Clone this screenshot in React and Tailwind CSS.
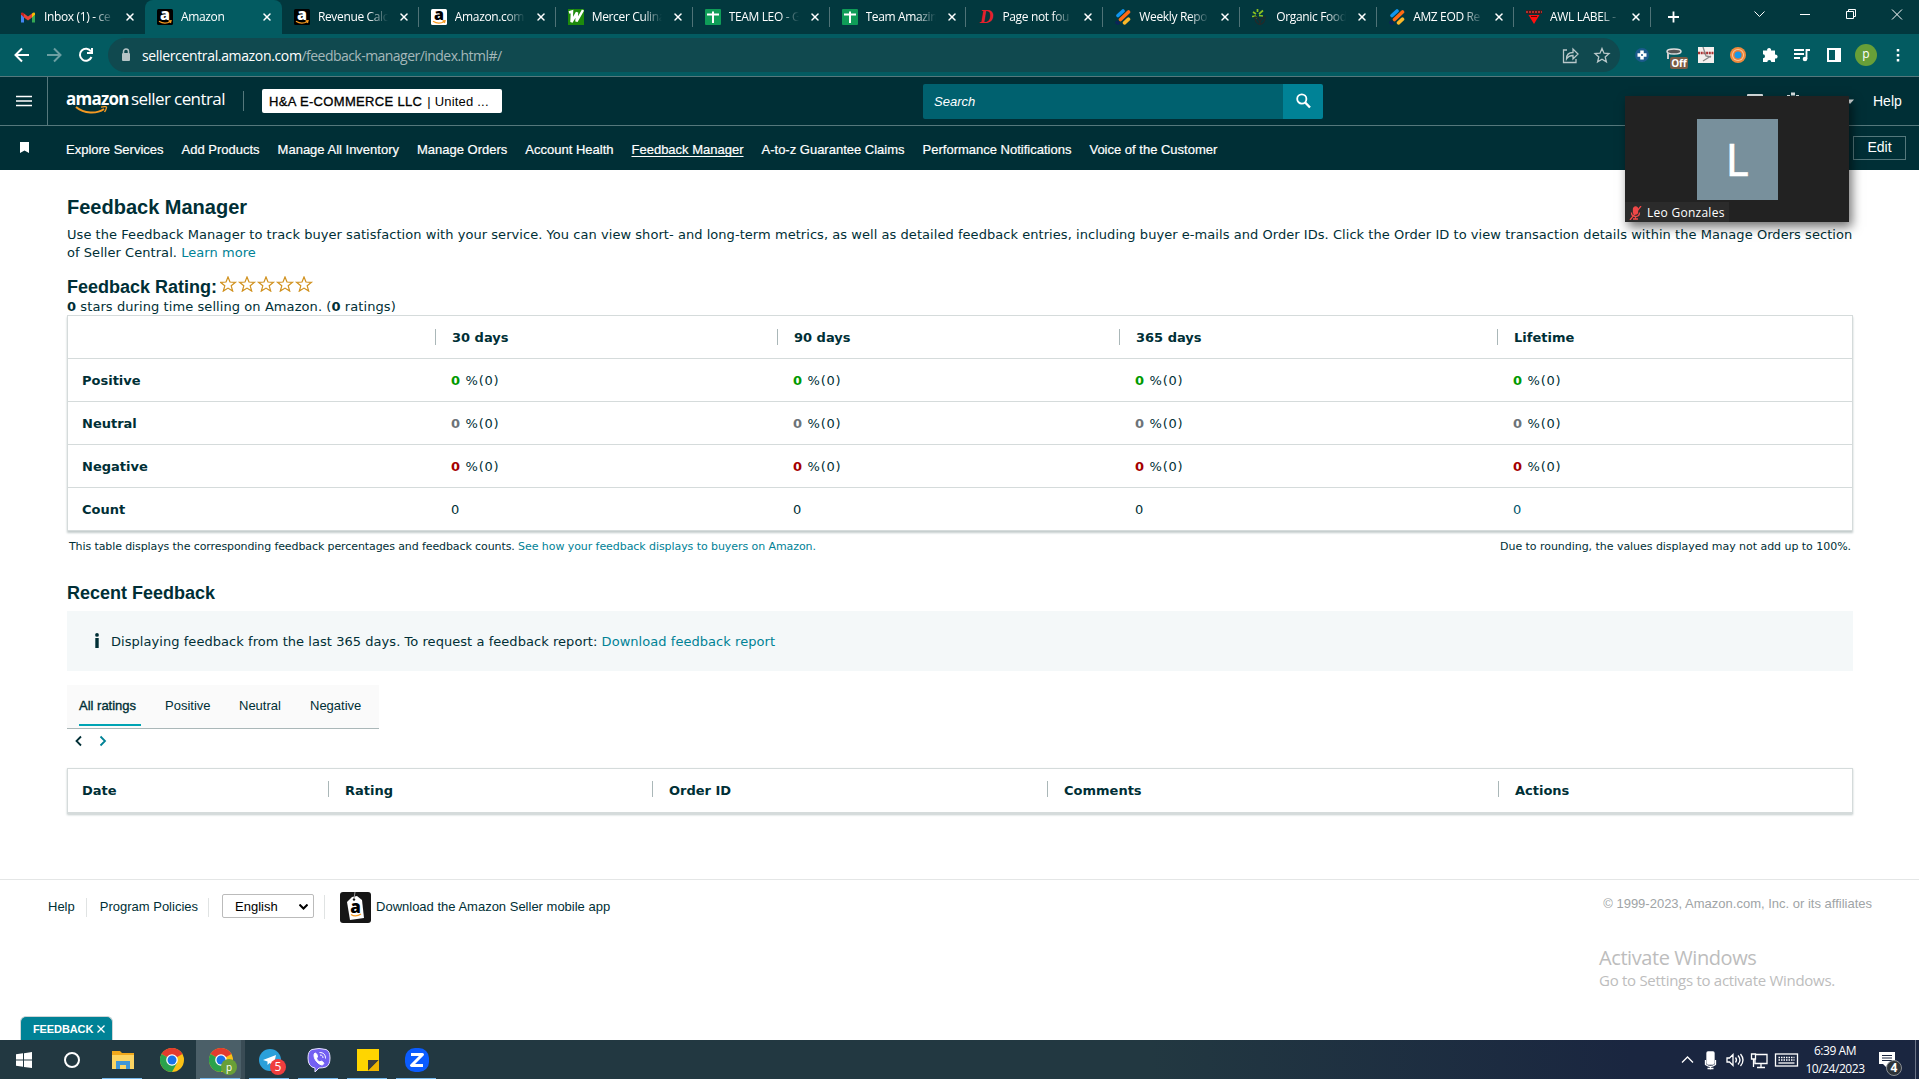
import { X } from "lucide-react";

const tabs = [
  { title: "Inbox (1) - ce", icon: "gmail" },
  { title: "Amazon", icon: "amazon", active: true },
  { title: "Revenue Calc", icon: "amazon" },
  { title: "Amazon.com", icon: "amazonLight" },
  { title: "Mercer Culina", icon: "mercer" },
  { title: "TEAM LEO - G", icon: "sheets" },
  { title: "Team Amazin", icon: "sheets" },
  { title: "Page not fou", icon: "dee" },
  { title: "Weekly Repo", icon: "stripes" },
  { title: "Organic Food", icon: "plant" },
  { title: "AMZ EOD Re", icon: "stripes" },
  { title: "AWL LABEL -", icon: "label" },
];

const navLinks = [
  "Explore Services",
  "Add Products",
  "Manage All Inventory",
  "Manage Orders",
  "Account Health",
  "Feedback Manager",
  "A-to-z Guarantee Claims",
  "Performance Notifications",
  "Voice of the Customer",
];

const ratingRows = [
  { label: "Positive", color: "text-[#009a00]" },
  { label: "Neutral", color: "text-[#6c7378]" },
  { label: "Negative", color: "text-[#a50000]" },
];

function AmazonMark({ bg, fg }) {
  return (
    <svg width="16" height="16" viewBox="0 0 16 16">
      <rect width="16" height="16" rx="1.5" fill={bg} />
      <text x="8" y="11" textAnchor="middle" fontFamily="Open Sans, sans-serif" fontWeight="800" fontSize="16" fill={fg}>a</text>
      <path d="M2 12.300c3.500 2.300 8 2.300 11.500.2M11.500 11.800l2.500-.1-.6 2.300" stroke="#f79a1f" strokeWidth="1.300" fill="none" />
    </svg>
  );
}

function Favicon({ name }) {
  switch (name) {
    case "gmail":
      return (
        <svg width="16" height="16" viewBox="0 0 16 16">
          <path d="M1 4v9.500h3V7z" fill="#4285f4" />
          <path d="M12 7v6.500h3V4z" fill="#34a853" />
          <path d="M4 4.500 8 7.500l4-3v4L8 11.500 4 8.500z" fill="#ea4335" />
          <path d="M1 4.500V5.500L4 8.500V4.500C3 3 1 3 1 4.500z" fill="#c5221f" />
          <path d="M15 4.500V5.500L12 8.500V4.500C13 3 15 3 15 4.500z" fill="#fbbc04" />
        </svg>
      );
    case "amazon":
      return <AmazonMark bg="#000" fg="#fff" />;
    case "amazonLight":
      return <AmazonMark bg="#fff" fg="#000" />;
    case "mercer":
      return (
        <svg width="16" height="16" viewBox="0 0 16 16">
          <rect width="16" height="16" fill="#1e8a0c" />
          <path d="M1 3.500 4 2.500 3.500 13 9 3.500 8.500 12.500 15 1" stroke="#fff" strokeWidth="2.500" fill="none" />
        </svg>
      );
    case "sheets":
      return (
        <svg width="16" height="16" viewBox="0 0 16 16">
          <rect width="16" height="16" rx="1" fill="#0f9d58" />
          <path d="M2 5.500h12M8 2.500v11.500" stroke="#fff" strokeWidth="2" />
        </svg>
      );
    case "dee":
      return (
        <span className="w-4 text-center font-['Liberation_Serif',serif] text-[19px] leading-4 font-bold italic text-[#e5202b]">D</span>
      );
    case "stripes":
      return (
        <svg width="16" height="16" viewBox="0 0 16 16" strokeWidth="3.600" strokeLinecap="round">
          <path d="M3 6.500 8 2" stroke="#1095ee" />
          <path d="M5.500 10.500 13.500 3" stroke="#ff6a13" />
          <path d="M9.500 13.800 13.500 10.200" stroke="#fbb829" />
          <path d="M2 13.500 3 14" stroke="#0b2458" />
        </svg>
      );
    case "plant":
      return (
        <svg width="16" height="16" viewBox="0 0 16 16" fill="none">
          <path d="M5.500 3V0M4 5 1 3M7 5l4-3.500M4 7 0 7.500M7 6.500l4 .5M5 8 3.500 9" stroke="#8bc220" strokeWidth="1.700" />
          <path d="M3 8c0 5 2 7 5 7.500 3-1 5-2 5-7.500-2 0-4 2-5 6-1-3-3-6-5-6z" stroke="#232a2a" strokeWidth="1.300" />
        </svg>
      );
    default:
      return (
        <svg width="16" height="16" viewBox="0 0 16 16">
          <rect x="0" y="1" width="16" height="4" fill="#3a1d1d" />
          <path d="M0 3h16" stroke="#d33" strokeWidth="1.500" strokeDasharray="2 1" />
          <path d="M2.500 6h11L8 15z" fill="#ff1010" />
          <path d="M5 7.500h6" stroke="#600" />
        </svg>
      );
  }
}

function TabStrip() {
  return (
    <div className="flex h-[34px] bg-[#02383e] text-white">
      <div className="flex w-[1651px]">
        {tabs.map((tab, i) => (
          <div
            key={i}
            className={
              "flex min-w-0 items-center " +
              (i === 0 ? "w-[145px] pl-5 " : "flex-1 pl-3 ") +
              (tab.active ? "rounded-t-lg bg-[#035b61]" : "")
            }
          >
            <Favicon name={tab.icon} />
            <span className="ml-2 w-[70px] text-[12px] tracking-[-0.35px] whitespace-nowrap [mask-image:linear-gradient(to_right,black_72%,transparent)]">
              {tab.title}
            </span>
            <X className="ml-[10px] size-3 shrink-0" strokeWidth={3} />
            <span className="grow" />
            {i > 1 && <span className="h-5 w-px bg-[#4f7377]" />}
          </div>
        ))}
      </div>
      <svg width="268" height="34" viewBox="0 0 268 34" fill="none" stroke="#fff">
        <path d="M17 17h11M22.500 11.500v11" strokeWidth="1.800" />
        <path d="M103.500 11.500l5 5 5-5M149 14.500h10" />
        <path d="M195.500 11.500h7v7h-7zM197.500 11.500v-2h7v7h-2M241 9.500l10 10M251 9.500l-10 10" />
      </svg>
    </div>
  );
}

function Toolbar() {
  return (
    <div className="flex h-[42px] items-center bg-[#035b61] text-white">
      <svg width="108" height="42" viewBox="0 0 108 42" fill="none" strokeWidth="2">
        <path d="M29 21H16M22 14.500 15.500 21l6.500 6.500" stroke="#fff" />
        <path d="M47 21h13M54 14.500l6.500 6.500-6.500 6.500" stroke="#6c9fa2" />
        <path d="M91 17.500a6 6 0 1 0 .5 5.500M92 14v5h-5" stroke="#fff" />
      </svg>
      <div className="flex h-[34px] w-[1512px] items-center rounded-full bg-[#10494f] pl-[13px] text-[14px]">
        <svg width="10" height="14" viewBox="0 0 10 14">
          <rect x="1" y="5" width="8" height="8" rx="1" fill="#b5c4c6" />
          <path d="M2.500 5V3.500a2.500 2.500 0 0 1 5 0V5" stroke="#b5c4c6" strokeWidth="1.500" fill="none" />
        </svg>
        <span className="ml-[11px] tracking-[-0.35px]">sellercentral.amazon.com</span>
        <span className="grow tracking-[-0.54px] text-[#a5b8ba]">/feedback-manager/index.html#/</span>
        <svg width="60" height="20" viewBox="0 0 60 20" fill="none" stroke="#b9c8ca" strokeWidth="1.300">
          <path d="M7 5H3.500v12.500h12.500V14M6.500 14c0-4.500 2-6.500 6.500-6.500V4l5 5-5 5v-3.500c-3 0-5 1-6.500 3.500z" />
          <path d="M42 3.500l2 4.700 5 .4-3.800 3.300 1.200 5-4.400-2.700-4.400 2.700 1.200-5L35 8.600l5-.4z" />
        </svg>
      </div>
      <div className="ml-[6px] flex items-center">
        <ToolIcon>
          <circle cx="8" cy="8" r="7" fill="#1b5a8c" />
          <path d="M8 3.500v9M3.500 8h9" stroke="#fff" strokeWidth="3.500" />
          <circle cx="8" cy="8" r="1" fill="#1b5a8c" />
        </ToolIcon>
        <div className="relative flex w-8 justify-center">
          <svg width="16" height="16" viewBox="0 0 16 16">
            <ellipse cx="8" cy="4.500" rx="7" ry="2.500" fill="#555" stroke="#ddd" strokeWidth="1.500" />
            <path d="M2 6v6" stroke="#ccc" strokeWidth="2" />
          </svg>
          <span className="absolute top-[10px] left-3 w-[18px] rounded-xs bg-[#7b5c46] text-center text-[10px] leading-3 font-bold">Off</span>
        </div>
        <ToolIcon>
          <rect width="16" height="16" fill="#f4f0ee" />
          <path d="M0 6h16" stroke="#a33" strokeWidth="2.500" strokeDasharray="2 .7" />
          <path d="M5 0 8 9l5 1M13 9 5 14" stroke="#888" strokeWidth="1.300" fill="none" />
        </ToolIcon>
        <ToolIcon>
          <circle cx="8" cy="8" r="8" fill="#f08a3c" />
          <circle cx="8" cy="8" r="6" fill="#f8c79c" />
          <circle cx="8" cy="8" r="5" fill="#ee7d33" />
          <circle cx="8" cy="8" r="3.500" fill="#1698e8" />
        </ToolIcon>
        <ToolIcon>
          <path d="M1 3.500h4.200a2 2 0 1 1 3.800 0h4v4.200a2 2 0 1 1 0 3.800V15H9.300a2 2 0 0 0-4 0H1v-3.700a2 2 0 0 0 0-4z" fill="#fff" />
        </ToolIcon>
        <ToolIcon>
          <path d="M0 3h10M0 7h10M0 11h6" stroke="#fff" strokeWidth="1.800" />
          <path d="M12.500 12V3H16" stroke="#fff" strokeWidth="1.800" fill="none" />
          <circle cx="11" cy="12" r="2.300" fill="#fff" />
        </ToolIcon>
        <ToolIcon>
          <path d="M2 2h12v12H2zM10 2v12M12 2v12" stroke="#fff" strokeWidth="2" fill="none" />
        </ToolIcon>
        <div className="flex w-8 justify-center">
          <span className="flex size-[22px] items-center justify-center rounded-full bg-[#689f38] pb-0.5 text-[12px] leading-none">p</span>
        </div>
        <ToolIcon>
          <path d="M8 2v2.500M8 7v2.500M8 12v2.500" stroke="#fff" strokeWidth="2.500" />
        </ToolIcon>
      </div>
    </div>
  );
}

function ToolIcon({ children }) {
  return (
    <div className="flex w-8 justify-center">
      <svg width="16" height="16" viewBox="0 0 16 16">{children}</svg>
    </div>
  );
}

function SellerHeader() {
  return (
    <header className="bg-[#002f36] font-['Liberation_Sans',Arial,sans-serif] text-[13px] text-white">
      <div className="flex h-[50px] items-center border-y border-[#55787c]">
        <div className="flex h-full w-12 items-center justify-center border-r border-[#55787c]">
          <svg width="16" height="12" viewBox="0 0 16 12" stroke="#fff" strokeWidth="1.600">
            <path d="M0 1.500h16M0 6h16M0 10.500h16" />
          </svg>
        </div>
        <div className="relative ml-[18px] flex h-full w-[160px] items-center gap-1 pb-1 font-['Open_Sans',sans-serif] text-[17px] whitespace-nowrap">
          <b className="w-[61px] tracking-[-0.75px]">amazon</b>
          <span className="tracking-[-0.58px]">seller central</span>
          <svg className="absolute top-[29px] left-[9px]" width="34" height="9" viewBox="0 0 34 9" fill="none" stroke="#f59a23">
            <path d="M1 1c8 7 21 7 28 2" strokeWidth="2" />
            <path d="M26 1.200c4-1 6-.5 5.500.3-.2 2-1 3-2 4.500" strokeWidth="1.300" />
          </svg>
        </div>
        <span className="ml-[17px] h-5 w-px bg-[#55787c]" />
        <div className="ml-[18px] flex h-6 w-[240px] items-center gap-[5px] rounded-xs bg-white pt-px pl-[7px] text-black">
          <span className="tracking-[0.33px] [-webkit-text-stroke:0.3px]">H&amp;A E-COMMERCE LLC</span>
          <span className="tracking-[0.2px]">| United ...</span>
        </div>
        <div className="ml-[421px] flex h-[35px] w-[400px]">
          <div className="flex grow items-center rounded-l-xs bg-[#00616f] pt-px pl-[11px] italic">Search</div>
          <div className="flex w-10 items-center justify-center rounded-r-xs bg-[#008296]">
            <svg width="15" height="16" viewBox="0 0 15 16" fill="none" stroke="#fff">
              <circle cx="5.800" cy="6" r="4.600" strokeWidth="1.800" />
              <path d="M9.200 9.500 14 14.500" strokeWidth="2.400" />
            </svg>
          </div>
        </div>
        <svg className="mb-[6px] ml-[420px]" width="112" height="16" viewBox="0 0 112 16" fill="#dbe2e3">
          <rect x="4" y="4" width="16" height="10" rx="1" />
          <path d="M48 2.500h4v3h-4zM44 5h3v3h-3zM53 5h3v3h-3z" />
          <path d="M103 9.500h8l-4 4.500z" />
        </svg>
        <span className="ml-[18px] text-[14px]">Help</span>
      </div>
      <div className="flex h-11 items-center">
        <svg className="mb-px ml-[20px]" width="9" height="11" viewBox="0 0 9 11">
          <path d="M0 0h9v11L4.500 8.500 0 11z" fill="#fff" />
        </svg>
        <nav className="ml-[37px] flex grow gap-[18px] pt-1 [-webkit-text-stroke:0.2px]">
          {navLinks.map((link) => (
            <a key={link} className={link === "Feedback Manager" ? "underline underline-offset-2" : ""}>
              {link}
            </a>
          ))}
        </nav>
        <button className="mr-[13px] mb-px h-6 w-[53px] border border-[#55787c] text-[14px]">Edit</button>
      </div>
    </header>
  );
}

function Stars() {
  return (
    <svg width="95" height="16" viewBox="0 0 95 16" fill="none" stroke="#d0901c" strokeWidth="1.200">
      {[0, 19, 38, 57, 76].map((x) => (
        <path key={x} transform={"translate(" + x + " 0)"} d="M8 1l2 5 5.500.3-4.300 3.500 1.500 5.300-4.700-3-4.700 3L4.800 9.800.5 6.300 6 6z" />
      ))}
    </svg>
  );
}

function HeadCell({ children }) {
  return (
    <div className="relative flex items-center pl-[17px]">
      <span className="absolute top-3 left-0 h-4 w-px bg-[#aab7b8]" />
      {children}
    </div>
  );
}

function FeedbackPage() {
  return (
    <main className="h-[709px] px-[67px] pt-[25px] pr-[66px] font-['DejaVu_Sans',Verdana,sans-serif] text-[13px] leading-[18px] text-[#002f36]">
      <h1 className="font-['Liberation_Sans',Arial,sans-serif] text-[20px] leading-6 font-bold">Feedback Manager</h1>
      <p className="mt-[7px] tracking-[0.05px] whitespace-nowrap">
        Use the Feedback Manager to track buyer satisfaction with your service. You can view short- and long-term metrics, as well as detailed feedback entries, including buyer e-mails and Order IDs. Click the Order ID to view transaction details within the Manage Orders section
        <br />
        of Seller Central. <a className="text-[#008296]">Learn more</a>
      </p>
      <div className="mt-[13px] flex h-6 items-center gap-[3px]">
        <h2 className="font-['Liberation_Sans',Arial,sans-serif] text-[18px] font-bold">Feedback Rating:</h2>
        <div className="mb-[6px]">
          <Stars />
        </div>
      </div>
      <p className="-mt-px tracking-[0.08px]">
        <b>0</b> stars during time selling on Amazon. (<b>0</b> ratings)
      </p>
      <div className="-mt-px h-[216px] w-[1786px] divide-y divide-[#d5dbdb] border border-[#d5dbdb] shadow-[0_2px_2px_#c4cccc]">
        <div className="grid h-[43px] grid-cols-[367px_342px_342px_378px_1fr] pt-px font-bold">
          <span />
          <HeadCell>30 days</HeadCell>
          <HeadCell>90 days</HeadCell>
          <HeadCell>365 days</HeadCell>
          <HeadCell>Lifetime</HeadCell>
        </div>
        {ratingRows.map((row) => (
          <div key={row.label} className="grid h-[43px] grid-cols-[383px_342px_342px_378px_1fr] items-center pt-px">
            <b className="pl-[14px]">{row.label}</b>
            {[0, 1, 2, 3].map((i) => (
              <span key={i} className="tracking-[0.72px]">
                <b className={row.color}>0</b> %(0)
              </span>
            ))}
          </div>
        ))}
        <div className="grid h-[42px] grid-cols-[383px_342px_342px_378px_1fr] items-center pt-px">
          <b className="pl-[14px]">Count</b>
          <span>0</span>
          <span>0</span>
          <span>0</span>
          <span className="text-[#00566b]">0</span>
        </div>
      </div>
      <div className="mt-[7px] flex justify-between px-[2px] text-[11px]">
        <span className="tracking-[-0.1px]">
          This table displays the corresponding feedback percentages and feedback counts.{" "}
          <a className="tracking-[-0.07px] text-[#008296]">See how your feedback displays to buyers on Amazon.</a>
        </span>
        <span className="tracking-[-0.04px]">Due to rounding, the values displayed may not add up to 100%.</span>
      </div>
      <h2 className="mt-[25px] font-['Liberation_Sans',Arial,sans-serif] text-[18px] leading-6 font-bold">Recent Feedback</h2>
      <div className="mt-[6px] flex h-[60px] items-center bg-[#f4f8f9] pt-px pl-[27px]">
        <svg className="mb-[3px]" width="6" height="15" viewBox="0 0 6 15" fill="#002f36">
          <circle cx="3" cy="1.900" r="1.900" />
          <rect x="1.300" y="5" width="3.400" height="10" />
        </svg>
        <span className="ml-[11px] tracking-[0.05px]">
          Displaying feedback from the last 365 days. To request a feedback report:{" "}
          <a className="text-[#008296]">Download feedback report</a>
        </span>
      </div>
      <div className="mt-[14px] flex h-11 w-[312px] border-b border-[#aab7b8] bg-[#fafafa] pl-3 font-['Liberation_Sans',Arial,sans-serif] leading-[41px]">
        <span className="h-[41px] w-[62px] border-b-2 border-[#00a4b4] [-webkit-text-stroke:0.35px]">All ratings</span>
        <span className="ml-6 w-[74px]">Positive</span>
        <span className="w-[71px]">Neutral</span>
        <span>Negative</span>
      </div>
      <svg className="mt-[6px] ml-[8px]" width="34" height="12" viewBox="0 0 34 12" fill="none" strokeWidth="1.800">
        <path d="M6 1.500 1.500 6 6 10.500" stroke="#002f36" />
        <path d="M25.500 1.500 30 6l-4.500 4.500" stroke="#008296" />
      </svg>
      <div className="mt-[21px] grid h-[46px] w-[1786px] grid-cols-[260px_324px_395px_451px_1fr] border border-b-2 border-[#d5dbdb] font-bold shadow-[0_1px_2px_#c4cccc]">
        <span className="self-center pl-[14px]">Date</span>
        <HeadCell>Rating</HeadCell>
        <HeadCell>Order ID</HeadCell>
        <HeadCell>Comments</HeadCell>
        <HeadCell>Actions</HeadCell>
      </div>
    </main>
  );
}

function Footer() {
  return (
    <footer className="flex h-[161px] flex-col border-t border-[#e4e6e6] font-['Liberation_Sans',Arial,sans-serif] text-[13px] text-[#002f36]">
      <div className="mt-[11px] flex h-8 items-center pl-12">
        <span>Help</span>
        <span className="mr-[13px] ml-[11px] h-[19px] w-px bg-[#e0e3e3]" />
        <span>Program Policies</span>
        <span className="mr-[13px] ml-[10px] h-[19px] w-px bg-[#e0e3e3]" />
        <div className="mb-0.5 flex h-6 w-[92px] items-center justify-between rounded-xs border border-[#bbb] pt-px pr-[5px] pl-3 text-black">
          English
          <svg width="9" height="6" viewBox="0 0 9 6" fill="none" stroke="#000" strokeWidth="2">
            <path d="M.5.500l4 4 4-4" />
          </svg>
        </div>
        <span className="mr-[15px] ml-[10px] h-6 w-px bg-[#e0e3e3]" />
        <svg width="31" height="31" viewBox="0 0 31 31">
          <rect width="31" height="31" rx="3" fill="#161616" />
          <path d="M7 10l5-5 5-1 5 4 2 18-14 2z" fill="#fff" />
          <circle cx="14" cy="7.500" r="1.200" fill="#161616" />
          <path d="M14 7 15 0" stroke="#999" />
          <text x="15.500" y="20.500" textAnchor="middle" fontFamily="Open Sans, sans-serif" fontWeight="800" fontSize="17" fill="#000">a</text>
          <path d="M11 22.500c3 2 7 1.500 10-.5" stroke="#f59a23" strokeWidth="1.300" fill="none" />
        </svg>
        <span className="ml-[5px] grow">Download the Amazon Seller mobile app</span>
        <span className="mr-[47px] mb-[6px] text-[#a0a4a6]">© 1999-2023, Amazon.com, Inc. or its affiliates</span>
      </div>
      <div className="mt-[22px] ml-[1599px] font-['Open_Sans',sans-serif] text-[#bdbdbd]">
        <div className="text-[20px] leading-[26px] tracking-[-0.42px]">Activate Windows</div>
        <div className="text-[15px] leading-[19px] tracking-[-0.28px]">Go to Settings to activate Windows.</div>
      </div>
      <div className="mt-auto ml-5 flex h-6 w-[93px] items-center gap-[4px] rounded-t-md border border-b-0 border-[#cfd5d6] bg-[#008296] pt-px pl-3 text-[11px] font-bold tracking-[-0.1px] whitespace-nowrap text-white">
        FEEDBACK
        <svg width="8" height="8" viewBox="0 0 8 8" stroke="#fff" strokeWidth="1.300">
          <path d="M.5.500l7 7M7.500.500l-7 7" />
        </svg>
      </div>
    </footer>
  );
}

function ChromeIcon() {
  return (
    <svg width="24" height="24" viewBox="0 0 24 24">
      <circle cx="12" cy="12" r="12" fill="#fbc116" />
      <path d="M12 12 1.600 6A12 12 0 0 1 22.400 6z" fill="#e33b2e" />
      <path d="M1.600 6A12 12 0 0 0 12 24l5-9-5-3z" fill="#2ba24c" />
      <circle cx="12" cy="12" r="5.800" fill="#fff" />
      <circle cx="12" cy="12" r="4.500" fill="#1a73e8" />
    </svg>
  );
}

function TaskItem({ open, active, children }) {
  return (
    <div
      className={
        "relative flex h-full w-[49px] items-center justify-center " +
        (active ? "border-r-4 border-[#3a4c55] bg-[#4b5f68] pl-1" : "")
      }
    >
      {children}
      {open && <span className="absolute bottom-0 left-1 h-px w-10 bg-[#76b9ed]" />}
    </div>
  );
}

function Taskbar() {
  return (
    <div className="flex h-[39px] bg-linear-to-r from-[#223841] from-60% to-[#1a2640] to-85% text-white">
      <TaskItem>
        <svg className="mr-px" width="16" height="16" viewBox="0 0 16 16" fill="#fff">
          <path d="M0 2.300 7 1.300V7.600H0zM8 1.200 16 0v7.600H8zM0 8.500h7v6.300L0 13.800zM8 8.500h8V16L8 14.900z" />
        </svg>
      </TaskItem>
      <TaskItem>
        <span className="mr-[3px] size-4 rounded-full border-2 border-white" />
      </TaskItem>
      <TaskItem open>
        <svg width="22" height="18" viewBox="0 0 22 18">
          <path d="M0 0h8l2 2h12v16H0z" fill="#f0a81c" />
          <path d="M0 4h22v14H0z" fill="#fcd462" />
          <path d="M4 18v-8h14v8h-4v-4H8v4z" fill="#3f96d8" />
        </svg>
      </TaskItem>
      <TaskItem>
        <ChromeIcon />
      </TaskItem>
      <TaskItem open active>
        <ChromeIcon />
        <span className="absolute right-1 bottom-1 flex size-4 items-center justify-center rounded-full bg-[#689f38] pb-px text-[10px] leading-none">p</span>
      </TaskItem>
      <TaskItem open>
        <svg width="22" height="22" viewBox="0 0 22 22">
          <circle cx="11" cy="11" r="11" fill="#2ba0da" />
          <path d="M4 11 17 6l-2.500 11-4-3-2 2v-3.500z" fill="#fff" />
        </svg>
        <span className="absolute right-[8px] bottom-1 flex size-4 items-center justify-center rounded-full bg-[#f03e3e] text-[12px] leading-none">5</span>
      </TaskItem>
      <TaskItem open>
        <svg width="24" height="24" viewBox="0 0 24 24" fill="none" stroke="#fff">
          <path d="M5 1.500Q12-.5 19 1.500 23 3 23 10q0 7-4 9-3 1-7 1l-4 4v-4q-7-1-7-10 0-7 4-8.500z" fill="#7360f2" stroke="#e8e4ff" />
          <path d="M8 5c-3 2 1 11 7 12 3-1 2-3-1-4l-1 1c-2-1-3-2-3.500-4l1-1c0-2-1-4-2.500-4z" fill="#fff" />
          <path d="M12.500 4.500c4 0 6 2 6 6M13 7c2 0 3 1 3 3" />
        </svg>
      </TaskItem>
      <TaskItem open>
        <svg width="22" height="22" viewBox="0 0 22 22">
          <path d="M0 0h22v11v11H0z" fill="#ffd500" />
          <path d="M11 22V11h11z" fill="#3c3c3c" />
          <path d="M11 22 22 11v11z" fill="#f0b400" />
        </svg>
      </TaskItem>
      <TaskItem open>
        <svg className="ml-px" width="24" height="24" viewBox="0 0 24 24">
          <rect width="24" height="24" rx="10" fill="#0b5cff" />
          <path d="M6 6.500h11.500L6.500 17.500H18" fill="none" stroke="#fff" strokeWidth="3" strokeLinejoin="round" />
        </svg>
      </TaskItem>
      <div className="ml-auto flex h-full items-center">
        <svg width="120" height="20" viewBox="0 0 120 20" fill="none" stroke="#fff" strokeWidth="1.300">
          <path d="M1 12.500 6.500 7l5.500 5.500" />
          <rect x="26" y="2" width="7" height="12" rx="1" fill="#fff" />
          <path d="M24.500 10v4.500q5 4 10 0V10M29.500 17v2.500M26.500 18.500h6" />
          <path d="M46 8h2.500l3.500-3.500v11L48.500 12H46zM54.500 7.500q2 2.500 0 5M57 5.500q4 4.500 0 9M59.500 4q5 6 0 12" />
          <path d="M75 4.500h11v9H74V9M70.500 4h4v5h-4zM72.500 9v8M80 14v3M76 17.500h8" />
          <rect x="94.500" y="4" width="22" height="12" />
          <path d="M97.500 7.500h16M97.500 10h16" strokeDasharray="1.500 1" />
          <path d="M97.500 13h16" />
        </svg>
        <div className="ml-[4px] w-[60px] text-center text-[12px] leading-[18px] tracking-[-0.45px]">
          6:39 AM
          <br />
          10/24/2023
        </div>
        <div className="relative mr-[19px] ml-[13px]">
          <svg width="18" height="18" viewBox="0 0 18 18">
            <path d="M1 1h16v12H9v4l-4-4H1z" fill="#fff" />
            <path d="M4 4.500h10M4 7h10M4 9.500h10" stroke="#1a2640" />
          </svg>
          <span className="absolute top-[9px] left-[8px] flex size-4 items-center justify-center rounded-full border border-[#8a8f95] bg-[#2d3338] text-[12px] leading-none font-bold">4</span>
        </div>
        <span className="mr-[3px] h-full w-px bg-[#6c7487]" />
      </div>
    </div>
  );
}

function VideoCall() {
  return (
    <div className="absolute top-24 left-[1625px] flex h-[126px] w-56 flex-col items-center bg-[#222] pt-[23px] text-white shadow-[3px_5px_10px_rgba(0,0,0,0.55)]">
      <div className="flex size-[81px] items-center justify-center bg-[#78909c] pb-0.5 font-['Lato',sans-serif] text-[44px] [-webkit-text-stroke:0.3px]">L</div>
      <div className="mt-auto mr-auto flex h-5 w-[104px] items-center gap-[5px] bg-[#2b2b2b] pt-px pl-1 text-[12px] tracking-[0.27px] whitespace-nowrap">
        <svg width="13" height="14" viewBox="0 0 13 14" fill="none" stroke="#f04848" strokeWidth="1.300">
          <rect x="4.500" y="1" width="4" height="7" rx="2" fill="#f04848" />
          <path d="M2.500 6.500q0 4 4 4t4-4M6.500 10v3M4 13h5M12 0 1 14" />
        </svg>
        Leo Gonzales
      </div>
    </div>
  );
}

export default function App() {
  return (
    <div className="relative h-[1079px] w-[1919px] overflow-hidden bg-white font-['Open_Sans',sans-serif]">
      <TabStrip />
      <Toolbar />
      <SellerHeader />
      <FeedbackPage />
      <Footer />
      <Taskbar />
      <VideoCall />
    </div>
  );
}
